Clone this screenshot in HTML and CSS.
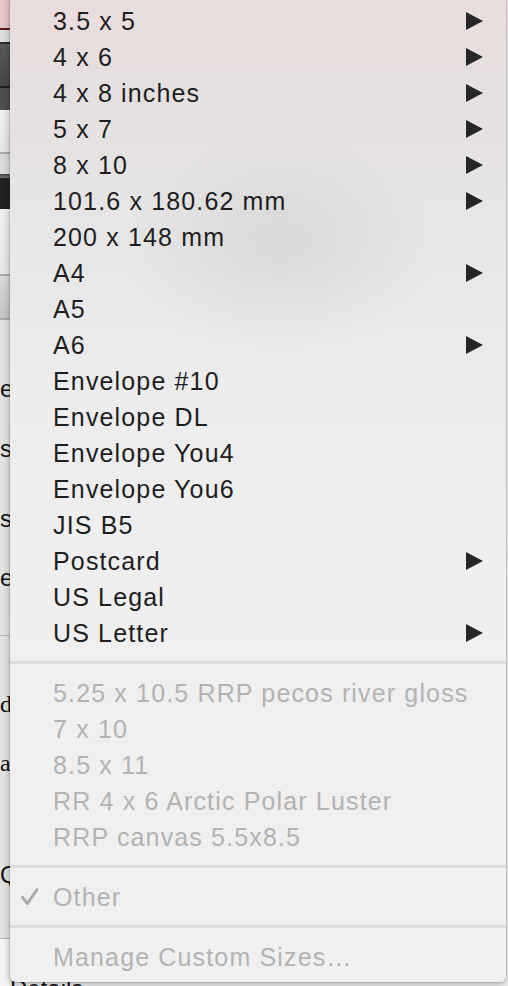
FILE: index.html
```html
<!DOCTYPE html>
<html>
<head>
<meta charset="utf-8">
<link rel="stylesheet" href="styles.css">
</head>
<body>
<div class="backdrop">
  <div class="strip">
    <div class="b b-pink"></div>
    <div class="b b-maroon"></div>
    <div class="b b-light1"></div>
    <div class="b b-dark1"></div>
    <div class="b b-darkgrad"></div>
    <div class="b b-dark2"></div>
    <div class="b b-dark3"></div>
    <div class="b b-light2"></div>
    <div class="b b-line"></div>
    <div class="b b-light3"></div>
    <div class="b b-dark4"></div>
    <div class="b b-black"></div>
    <div class="b b-light4"></div>
    <div class="b b-line"></div>
    <div class="b b-graygrad"></div>
    <div class="b b-line"></div>
    <div class="panel">
      <div class="frag f1">er</div>
      <div class="frag f2">s</div>
      <div class="frag f3">s</div>
      <div class="frag f4">e</div>
      <div class="b b-line2"></div>
      <div class="frag f5">d</div>
      <div class="frag f6">a</div>
      <div class="frag f7">Qu</div>
      <div class="b b-line3"></div>
      <div class="foot"><div class="frag details">Details</div></div>
    </div>
  </div>
</div>

<div class="menu">
  <div class="item"><span class="label">3.5 x 5</span><span class="arrow"></span></div>
  <div class="item"><span class="label">4 x 6</span><span class="arrow"></span></div>
  <div class="item"><span class="label">4 x 8 inches</span><span class="arrow"></span></div>
  <div class="item"><span class="label">5 x 7</span><span class="arrow"></span></div>
  <div class="item"><span class="label">8 x 10</span><span class="arrow"></span></div>
  <div class="item"><span class="label">101.6 x 180.62 mm</span><span class="arrow"></span></div>
  <div class="item"><span class="label">200 x 148 mm</span></div>
  <div class="item"><span class="label">A4</span><span class="arrow"></span></div>
  <div class="item"><span class="label">A5</span></div>
  <div class="item"><span class="label">A6</span><span class="arrow"></span></div>
  <div class="item"><span class="label">Envelope #10</span></div>
  <div class="item"><span class="label">Envelope DL</span></div>
  <div class="item"><span class="label">Envelope You4</span></div>
  <div class="item"><span class="label">Envelope You6</span></div>
  <div class="item"><span class="label">JIS B5</span></div>
  <div class="item"><span class="label">Postcard</span><span class="arrow"></span></div>
  <div class="item"><span class="label">US Legal</span></div>
  <div class="item"><span class="label">US Letter</span><span class="arrow"></span></div>
  <div class="sep"></div>
  <div class="item disabled"><span class="label">5.25 x 10.5 RRP pecos river gloss</span></div>
  <div class="item disabled"><span class="label">7 x 10</span></div>
  <div class="item disabled"><span class="label">8.5 x 11</span></div>
  <div class="item disabled"><span class="label">RR 4 x 6 Arctic Polar Luster</span></div>
  <div class="item disabled"><span class="label">RRP canvas 5.5x8.5</span></div>
  <div class="sep"></div>
  <div class="item disabled">
    <svg class="check" width="20" height="20" viewBox="0 0 20 20"><path d="M2.5 10.5 L7.5 16.5 L17 2.5" fill="none" stroke="#a9a9a9" stroke-width="3" stroke-linecap="round" stroke-linejoin="round"/></svg>
    <span class="label">Other</span>
  </div>
  <div class="sep"></div>
  <div class="item disabled"><span class="label">Manage Custom Sizes…</span></div>
</div>
</body>
</html>
```

FILE: styles.css
```css
html, body {
  margin: 0;
  padding: 0;
  width: 508px;
  height: 986px;
  overflow: hidden;
  background: #e9e9e9;
  font-family: "Liberation Sans", Arial, sans-serif;
}

.backdrop {
  width: 508px;
  height: 986px;
}

.strip {
  width: 10px;
  display: flex;
  flex-direction: column;
}

.b { width: 100%; flex: none; }
.b-pink { height: 28px; background: #e9c4c8; }
.b-maroon { height: 2px; background: #5b1c20; }
.b-light1 { height: 12px; background: #dedede; }
.b-dark1 { height: 2px; background: #2c2c2c; }
.b-darkgrad { height: 42px; background: linear-gradient(#5a5a5a, #474747); }
.b-dark2 { height: 2px; background: #1e1e1e; }
.b-dark3 { height: 22px; background: #4e4e4e; }
.b-light2 { height: 42px; background: linear-gradient(#f2f2f2, #e4e4e4); }
.b-line { height: 2px; background: #a9a9a9; }
.b-light3 { height: 20px; background: #dcdcdc; }
.b-dark4 { height: 4px; background: linear-gradient(#444, #777); }
.b-black { height: 31px; background: #232323; }
.b-light4 { height: 65px; background: linear-gradient(#f0f0f0, #e6e6e6); }
.b-graygrad { height: 42px; background: linear-gradient(#dadada, #c4c4c4); }

.panel {
  background: #e2e2e2;
  display: flex;
  flex-direction: column;
  height: 666px;
}

.frag {
  height: 20px;
  font-size: 24px;
  line-height: 20px;
  color: #111;
  white-space: nowrap;
  flex: none;
}
.f1 { margin-top: 59px; }
.f2 { margin-top: 40px; }
.f3 { margin-top: 50px; }
.f4 { margin-top: 39px; }
.b-line2 { height: 1px; background: #bdbdbd; margin-top: 47px; }
.f5 { margin-top: 58px; font-family: "Liberation Serif", serif; }
.f6 { margin-top: 39px; font-family: "Liberation Serif", serif; }
.f7 { margin-top: 92px; }
.b-line3 { height: 1px; background: #b5b5b5; margin-top: 53px; }
.foot {
  flex: 1;
  background: #f4f4f4;
  padding-top: 40px;
}
.details { margin-left: 10px; }

.menu {
  position: absolute;
  left: 10px;
  top: -6px;
  width: 496px;
  padding: 9px 0 7px 0;
  border-radius: 6px;
  background:
    radial-gradient(ellipse 160px 110px at 270px 250px, rgba(200,200,200,0.45), rgba(200,200,200,0) 100%),
    linear-gradient(180deg, #eadcdd 0px, #e6dfdf 90px, #e6e4e4 200px, #ececec 380px, #efefef 600px, #f0f0f0 100%);
  box-shadow: 0 0 0 1px rgba(0,0,0,0.08), -1px 2px 6px rgba(0,0,0,0.25);
  font-size: 25px;
  letter-spacing: 1.15px;
  color: #1e1e1e;
}

.item {
  height: 36px;
  display: flex;
  align-items: center;
  padding-left: 43px;
  position: relative;
}

.label {
  white-space: nowrap;
  line-height: 36px;
}

.arrow {
  position: absolute;
  right: 23px;
  top: 9px;
  width: 0;
  height: 0;
  border-top: 9.5px solid transparent;
  border-bottom: 9.5px solid transparent;
  border-left: 17px solid #262626;
}

.disabled { color: #b3b3b3; }

.check {
  position: absolute;
  left: 10px;
  top: 8px;
}

.sep {
  height: 3px;
  margin: 10px 0 11px 0;
  background: #dcdcdc;
}
```
